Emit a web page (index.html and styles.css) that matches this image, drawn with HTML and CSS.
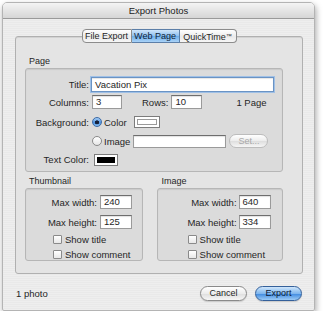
FILE: index.html
```html
<!DOCTYPE html>
<html lang="en">
<head>
    <meta charset="UTF-8">
    <title>Export Photos</title>
    <link rel="stylesheet" href="styles.css">
</head>
<body>
    <div class="window">
        <div class="titlebar">Export Photos</div>
        <div class="content">
            <div class="tabs">
                <span class="tab t-file">File Export</span>
                <span class="tab t-web active">Web Page</span>
                <span class="tab t-qt">QuickTime<small>™</small></span>
            </div>
            <div class="pane">
                <div class="group-label">Page</div>
                <div class="group page">
                    <div class="row r-title">
                        <span class="lbl">Title:</span>
                        <span class="field focus title-field">Vacation Pix</span>
                    </div>
                    <div class="row r-cols">
                        <span class="lbl">Columns:</span>
                        <span class="field w-cols">3</span>
                        <span class="rows-lbl">Rows:</span>
                        <span class="field w-rows">10</span>
                        <span class="pages">1 Page</span>
                    </div>
                    <div class="row r-bg">
                        <span class="lbl">Background:</span>
                        <span class="radio on"></span>
                        <span class="opt">Color</span>
                        <span class="well well-color"><i></i></span>
                    </div>
                    <div class="row r-img">
                        <span class="lbl"></span>
                        <span class="radio"></span>
                        <span class="opt">Image</span>
                        <span class="field w-path"></span>
                        <span class="btn small disabled">Set...</span>
                    </div>
                    <div class="row r-tc">
                        <span class="lbl">Text Color:</span>
                        <span class="well well-text"><i></i></span>
                    </div>
                </div>

                <div class="halves">
                    <div class="half thumb">
                        <div class="group-label">Thumbnail</div>
                        <div class="group sub">
                            <div class="row r-size">
                                <span class="lbl">Max width:</span>
                                <span class="field w-num">240</span>
                            </div>
                            <div class="row r-size r-gap">
                                <span class="lbl">Max height:</span>
                                <span class="field w-num">125</span>
                            </div>
                            <div class="row r-check">
                                <span class="check"></span>
                                <span>Show title</span>
                            </div>
                            <div class="row r-check">
                                <span class="check"></span>
                                <span>Show comment</span>
                            </div>
                        </div>
                    </div>
                    <div class="half image">
                        <div class="group-label">Image</div>
                        <div class="group sub">
                            <div class="row r-size">
                                <span class="lbl">Max width:</span>
                                <span class="field w-num">640</span>
                            </div>
                            <div class="row r-size r-gap">
                                <span class="lbl">Max height:</span>
                                <span class="field w-num">334</span>
                            </div>
                            <div class="row r-check">
                                <span class="check"></span>
                                <span>Show title</span>
                            </div>
                            <div class="row r-check">
                                <span class="check"></span>
                                <span>Show comment</span>
                            </div>
                        </div>
                    </div>
                </div>
            </div>

            <div class="footer">
                <span class="count">1 photo</span>
                <span class="btn cancel">Cancel</span>
                <span class="btn default">Export</span>
            </div>
        </div>
    </div>
</body>
</html>
```

FILE: styles.css
```css
/* General Styles */
body {
    margin: 0;
    background: #ffffff;
    font-family: "Liberation Sans", Arial, sans-serif;
    font-size: 9.5px;
    line-height: 11px;
    color: #262626;
}

.window {
    margin: 2px 0 0 2px;
    width: 313px;
    height: 309px;
    box-sizing: border-box;
    border: 1px solid #b4b4b4;
    border-radius: 5px 5px 2px 2px;
    background: repeating-linear-gradient(#eeeeee 0, #eeeeee 1px, #e9e9e9 1px, #e9e9e9 2px);
    box-shadow: 1px 3px 6px rgba(0, 0, 0, 0.35);
    overflow: hidden;
}

.titlebar {
    height: 15px;
    line-height: 15px;
    text-align: center;
    background: linear-gradient(#f4f4f4, #d6d6d6);
    border-bottom: 1px solid #9a9a9a;
    color: #222;
}

.content {
    padding: 10px 11px 0 12px;
}

/* Tabs */
.tabs {
    display: flex;
    justify-content: center;
    position: relative;
    z-index: 1;
    height: 14px;
}

.tab {
    height: 14px;
    box-sizing: border-box;
    line-height: 12px;
    font-size: 9px;
    text-align: center;
    border: 1px solid #8c8c8c;
    border-left: none;
    background: linear-gradient(#ffffff, #eaeaea 55%, #f6f6f6);
}

.tab small {
    font-size: 6px;
    vertical-align: 2px;
}

.t-file {
    width: 50px;
    border-left: 1px solid #8c8c8c;
    border-radius: 4px 0 0 4px;
}

.t-web {
    width: 48px;
}

.t-qt {
    width: 57px;
    border-radius: 0 4px 4px 0;
}

.tab.active {
    background: linear-gradient(#cfe5fa, #8ec0f0 50%, #6eaee9 52%, #a9d2f7);
    border-color: #5c7fa8;
    color: #0f1f3a;
}

.pane {
    margin-top: -7px;
    height: 238px;
    box-sizing: border-box;
    padding: 19px 19px 0 9px;
    background: #e4e4e4;
    border: 1px solid #b0b0b0;
    border-radius: 3px;
    box-shadow: inset 0 1px 0 #d2d2d2;
}

.group-label {
    height: 12px;
    padding-left: 4px;
    font-size: 9px;
}

.group {
    box-sizing: border-box;
    background: #dbdbdb;
    border: 1px solid #b6b6b6;
    border-radius: 3px;
    box-shadow: inset 0 1px 1px rgba(0, 0, 0, 0.08);
}

.page {
    height: 104px;
    padding-top: 8px;
}

.row {
    display: flex;
    align-items: center;
}

.lbl {
    text-align: right;
    flex-shrink: 0;
}

.page .lbl {
    width: 63px;
    margin-right: 2px;
}

.r-title { height: 15px; }
.r-cols { height: 14px; margin-top: 3px; }
.r-bg { height: 14px; margin-top: 6px; }
.r-img { height: 14px; margin-top: 5px; }
.r-tc { height: 13px; margin-top: 5px; }

/* Text fields */
.field {
    box-sizing: border-box;
    height: 14px;
    line-height: 12px;
    padding-left: 3px;
    background: #ffffff;
    border: 1px solid #9a9a9a;
    border-top-color: #6e6e6e;
    box-shadow: inset 0 1px 1px rgba(0, 0, 0, 0.12);
}

.title-field {
    width: 183px;
    height: 15px;
    line-height: 13px;
}

.field.focus {
    border-color: #6a93c4;
    box-shadow: 0 0 0 1px #9fc0e6, inset 0 1px 1px rgba(0, 0, 0, 0.1);
}

.w-cols {
    width: 30px;
    margin-left: 1px;
}

.rows-lbl {
    margin-left: 20px;
    margin-right: 3px;
}

.w-rows {
    width: 31px;
}

.pages {
    margin-left: 34px;
}

.w-path {
    width: 93px;
    height: 13px;
    margin-left: 3px;
}

/* Radio buttons and wells */
.radio {
    width: 10px;
    height: 10px;
    box-sizing: border-box;
    border-radius: 50%;
    border: 1px solid #8a8a8a;
    background: linear-gradient(#ffffff, #e6e6e6);
    margin-left: 1px;
}

.radio.on {
    border-color: #3d6aa5;
    background: radial-gradient(circle at 50% 55%, #14203a 0, #14203a 1.8px, transparent 2.2px), linear-gradient(#a6cdf4, #4d92e0 60%, #8bc0f2);
}

.opt {
    margin-left: 2px;
}

.well {
    box-sizing: border-box;
    display: flex;
    padding: 2px;
    background: #ffffff;
    border: 1px solid #7c7c7c;
}

.well i {
    flex: 1;
    border: 1px solid #9a9a9a;
}

.well-color {
    width: 26px;
    height: 12px;
    margin-left: 7px;
}

.well-color i {
    background: #ffffff;
}

.well-text {
    width: 24px;
    height: 12px;
    margin-left: 3px;
}

.well-text i {
    background: #000000;
    border-color: #000000;
}

/* Buttons */
.btn {
    box-sizing: border-box;
    display: inline-block;
    height: 15px;
    line-height: 13px;
    font-size: 9px;
    text-align: center;
    border: 1px solid #8a8a8a;
    border-radius: 8px;
    background: linear-gradient(#ffffff, #ececec 50%, #dedede 52%, #f6f6f6);
    box-shadow: 0 1px 1px rgba(0, 0, 0, 0.15);
}

.btn.small {
    width: 39px;
    height: 14px;
    line-height: 12px;
    margin-left: 3px;
}

.btn.disabled {
    color: #a8a8a8;
    border-color: #bcbcbc;
    box-shadow: none;
}

/* Bottom groups */
.halves {
    display: flex;
    gap: 14px;
    margin-top: 4px;
}

.thumb {
    width: 119px;
}

.image {
    width: 128px;
}

.image .group-label {
    padding-left: 5px;
}

.sub {
    height: 73px;
    padding-top: 6px;
}

.thumb .lbl {
    width: 71px;
    margin-right: 3px;
}

.image .lbl {
    width: 79px;
    margin-right: 2px;
}

.w-num {
    width: 32px;
}

.r-size { height: 14px; }
.r-gap { margin-top: 6px; }

.r-check {
    height: 10px;
    margin-top: 5px;
}

.thumb .r-check { padding-left: 27px; }
.image .r-check { padding-left: 30px; }

.check {
    width: 9px;
    height: 9px;
    box-sizing: border-box;
    border: 1px solid #8a8a8a;
    border-radius: 1px;
    background: linear-gradient(#ffffff, #e8e8e8);
    margin-right: 3px;
}

/* Footer */
.footer {
    display: flex;
    align-items: center;
    height: 15px;
    margin-top: 12px;
    padding: 0 1px;
}

.count {
    flex: 1;
}

.cancel {
    width: 47px;
}

.default {
    width: 47px;
    margin-left: 8px;
    border-color: #34609a;
    color: #0c1a33;
    background: linear-gradient(#cfe6fb, #7fb6ee 50%, #3f8ae0 52%, #9ccbf6);
}
```
